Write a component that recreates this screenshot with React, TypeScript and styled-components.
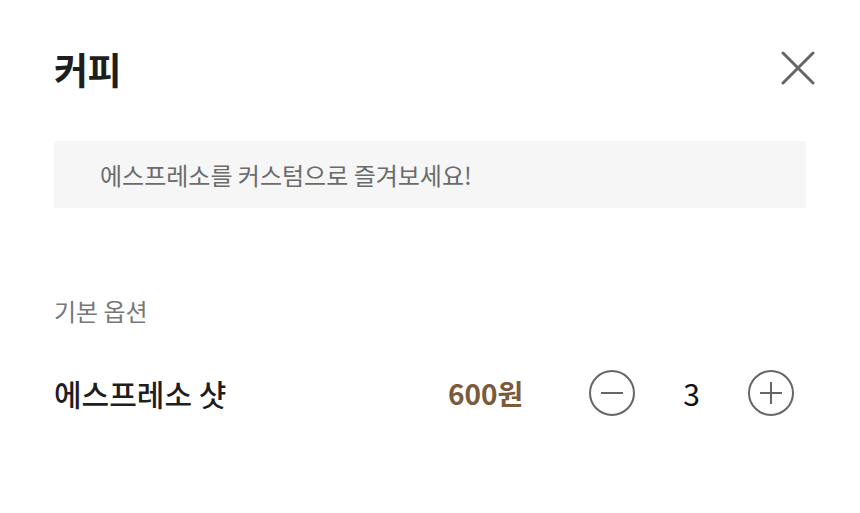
import React, {useState} from "react";
import styled, {createGlobalStyle} from "styled-components";

const GlobalStyle = createGlobalStyle`
  body {
    margin: 0;
    background: #fff;
    font-family: "Noto Sans CJK KR", "Noto Sans", sans-serif;
  }
`;

const Sheet = styled.div`
  width: 860px;
  height: 513px;
  box-sizing: border-box;
  padding: 44px 54px 0 54px;
`;

const Header = styled.div`
  display: flex;
  align-items: center;
  justify-content: space-between;
  height: 50px;
`;

const Title = styled.h1`
  margin: 0;
  font-size: 37px;
  font-weight: 700;
  color: #1e1e1e;
  letter-spacing: -0.5px;
`;

const CloseButton = styled.button`
  border: none;
  background: none;
  padding: 0;
  width: 36px;
  height: 36px;
  display: flex;
  align-items: center;
  justify-content: center;
  margin-right: -10px;
  margin-top: -2px;
  cursor: pointer;
`;

const Banner = styled.div`
  margin-top: 47px;
  height: 67px;
  background: #f6f6f6;
  display: flex;
  align-items: center;
  padding-left: 46px;
  font-size: 24px;
  color: #6b6b6b;
`;

const Section = styled.div`
  margin-top: 88px;
`;

const SectionLabel = styled.div`
  font-size: 24px;
  color: #777;
  line-height: 30px;
`;

const OptionRow = styled.div`
  display: flex;
  align-items: center;
  margin-top: 42px;
  height: 50px;
`;

const OptionName = styled.div`
  flex: 1;
  font-size: 30px;
  font-weight: 500;
  color: #1e1e1e;
`;

const Price = styled.div`
  font-size: 28px;
  font-weight: 700;
  color: #7b5a3c;
  width: 141px;
`;

const Stepper = styled.div`
  display: flex;
  align-items: center;
  margin-right: 12px;
`;

const RoundButton = styled.button`
  width: 46px;
  height: 46px;
  border: none;
  background: none;
  padding: 0;
  cursor: pointer;
  display: flex;
`;

const Count = styled.div`
  width: 113px;
  text-align: center;
  font-size: 30px;
  color: #111;
`;

const MinusIcon = () => (
  <svg width="46" height="46" viewBox="0 0 46 46">
    <circle cx="23" cy="23" r="22" fill="none" stroke="#666" strokeWidth="2" />
    <line x1="12" y1="23" x2="34" y2="23" stroke="#666" strokeWidth="2" />
  </svg>
);

const PlusIcon = () => (
  <svg width="46" height="46" viewBox="0 0 46 46">
    <circle cx="23" cy="23" r="22" fill="none" stroke="#666" strokeWidth="2" />
    <line x1="12" y1="23" x2="34" y2="23" stroke="#666" strokeWidth="2" />
    <line x1="23" y1="12" x2="23" y2="34" stroke="#666" strokeWidth="2" />
  </svg>
);

const App: React.FC = () => {
  const [count, setCount] = useState(3);

  return (
    <>
      <GlobalStyle />
      <Sheet>
        <Header>
          <Title>커피</Title>
          <CloseButton aria-label="닫기">
            <svg width="34" height="34" viewBox="0 0 34 34">
              <path d="M2 2 L32 32 M32 2 L2 32" stroke="#666" strokeWidth="3" strokeLinecap="round" />
            </svg>
          </CloseButton>
        </Header>
        <Banner>에스프레소를 커스텀으로 즐겨보세요!</Banner>
        <Section>
          <SectionLabel>기본 옵션</SectionLabel>
          <OptionRow>
            <OptionName>에스프레소 샷</OptionName>
            <Price>600원</Price>
            <Stepper>
              <RoundButton onClick={() => setCount(Math.max(0, count - 1))}>
                <MinusIcon />
              </RoundButton>
              <Count>{count}</Count>
              <RoundButton onClick={() => setCount(count + 1)}>
                <PlusIcon />
              </RoundButton>
            </Stepper>
          </OptionRow>
        </Section>
      </Sheet>
    </>
  );
};

export default App;
